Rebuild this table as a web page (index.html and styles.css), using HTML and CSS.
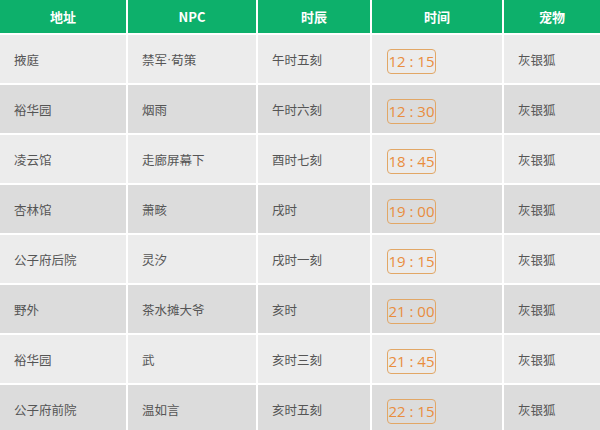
FILE: index.html
```html
<!DOCTYPE html>
<html lang="zh">
<head>
<meta charset="utf-8">
<link rel="stylesheet" href="styles.css">
</head>
<body>
<div class="table">
  <div class="th">地址</div><div class="th">NPC</div><div class="th">时辰</div><div class="th">时间</div><div class="th">宠物</div>

  <div class="td">掖庭</div><div class="td">禁军<span class="dot">·</span>荀策</div><div class="td">午时五刻</div><div class="td"><span class="time">12 : 15</span></div><div class="td">灰银狐</div>

  <div class="td dark">裕华园</div><div class="td dark">烟雨</div><div class="td dark">午时六刻</div><div class="td dark"><span class="time">12 : 30</span></div><div class="td dark">灰银狐</div>

  <div class="td">凌云馆</div><div class="td">走廊屏幕下</div><div class="td">酉时七刻</div><div class="td"><span class="time">18 : 45</span></div><div class="td">灰银狐</div>

  <div class="td dark">杏林馆</div><div class="td dark">萧畡</div><div class="td dark">戌时</div><div class="td dark"><span class="time">19 : 00</span></div><div class="td dark">灰银狐</div>

  <div class="td">公子府后院</div><div class="td">灵汐</div><div class="td">戌时一刻</div><div class="td"><span class="time">19 : 15</span></div><div class="td">灰银狐</div>

  <div class="td dark">野外</div><div class="td dark">茶水摊大爷</div><div class="td dark">亥时</div><div class="td dark"><span class="time">21 : 00</span></div><div class="td dark">灰银狐</div>

  <div class="td">裕华园</div><div class="td">武</div><div class="td">亥时三刻</div><div class="td"><span class="time">21 : 45</span></div><div class="td">灰银狐</div>

  <div class="td dark">公子府前院</div><div class="td dark">温如言</div><div class="td dark">亥时五刻</div><div class="td dark"><span class="time">22 : 15</span></div><div class="td dark">灰银狐</div>
</div>
</body>
</html>
```
FILE: styles.css
```css
html, body {
  margin: 0;
  padding: 0;
  background: #ffffff;
}
body {
  font-family: "Noto Sans CJK SC", "Noto Sans", sans-serif;
  width: 600px;
  height: 430px;
  overflow: hidden;
}
.table {
  display: grid;
  grid-template-columns: 126px 128px 112px 130px 96px;
  grid-template-rows: 33px;
  grid-auto-rows: 48px;
  gap: 2px;
  background: #ffffff;
}
.th {
  background: #0db06b;
  color: #ffffff;
  font-weight: bold;
  font-size: 13px;
  display: flex;
  align-items: center;
  justify-content: center;
}
.td {
  background: #ececec;
  color: #555555;
  font-size: 12.5px;
  display: flex;
  align-items: center;
  padding-left: 14px;
}
.td.dark {
  background: #dcdcdc;
}
.dot {
  font-family: "Liberation Sans", sans-serif;
}
.time {
  display: inline-block;
  box-sizing: border-box;
  width: 49px;
  height: 25px;
  line-height: 23px;
  margin-top: 5px;
  margin-left: 1px;
  border: 1px solid #e2a766;
  border-radius: 4px;
  color: #e98d3e;
  font-family: "Open Sans", "Noto Sans", sans-serif;
  font-size: 15px;
  text-align: center;
}
```
